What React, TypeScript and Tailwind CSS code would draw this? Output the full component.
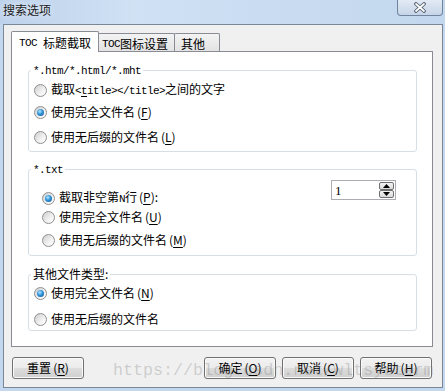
import React from "react";

const Radio = ({ checked }: { checked?: boolean }) => (
  <span className="w-[13px] h-[13px] shrink-0 rounded-full border border-[#8f8f8f] bg-[linear-gradient(135deg,#cdcdcd,#f2f2f2_60%,#ffffff)] flex items-center justify-center">
    {checked && (
      <span className="w-[7px] h-[7px] rounded-full bg-[radial-gradient(circle_at_40%_35%,#b4e6fc_0%,#2f93d8_45%,#0b4c90_100%)]" />
    )}
  </span>
);

const M = ({ children }: { children: React.ReactNode }) => (
  <span className="font-['Liberation_Mono',monospace] text-[11px] tracking-[-0.6px]">{children}</span>
);

const K = ({ k }: { k: string }) => (
  <span className="ml-[2px]">
    (<span className="underline underline-offset-2">{k}</span>)
  </span>
);

const Row = ({
  checked,
  children,
  className,
}: {
  checked?: boolean;
  children: React.ReactNode;
  className?: string;
}) => (
  <div className={"flex items-center gap-[4px] whitespace-nowrap " + (className ?? "")}>
    <Radio checked={checked} />
    <span className="leading-[16px]">{children}</span>
  </div>
);

const Btn = ({ children, className }: { children: React.ReactNode; className?: string }) => (
  <div
    className={
      "w-[72px] h-[22px] rounded-[3px] border border-[#707070] bg-[linear-gradient(#f2f2f2_0%,#ebebeb_50%,#dddddd_50%,#cfcfcf_100%)] shadow-[inset_0_0_0_1px_#fbfbfb] flex items-center justify-center leading-[14px] " +
      (className ?? "")
    }
  >
    {children}
  </div>
);

const SpinBtn = ({ up }: { up?: boolean }) => (
  <div className="w-[15px] h-[8px] rounded-[2px] border border-[#707070] bg-[linear-gradient(#f4f4f4,#d9d9d9)] flex items-center justify-center">
    <svg width="7" height="4" viewBox="0 0 7 4">
      {up ? <path d="M0 4 L3.5 0 L7 4 Z" fill="#000" /> : <path d="M0 0 L7 0 L3.5 4 Z" fill="#000" />}
    </svg>
  </div>
);

export default function App() {
  return (
    <div className="relative w-[445px] h-[391px] overflow-hidden bg-[#c3d7ee] flex flex-col font-['Noto_Sans_CJK_SC',sans-serif] text-[12px] text-black">
      {/* title bar */}
      <div className="h-[24px] shrink-0 flex items-start justify-between bg-[linear-gradient(90deg,#bdd2eb,#d0e1f4_30%,#c9dcf1_60%,#c3d7ee)]">
        <span className="ml-[3px] mt-[2px] text-[12px] leading-[16px] text-[#1b1b1b] [text-shadow:0_0_6px_rgba(255,255,255,0.9)]">
          搜索选项
        </span>
        <div className="mr-[2px] w-[46px] h-[16px] rounded-b-[4px] border border-t-0 border-[#71849d] bg-[linear-gradient(#e2eaf4,#c6d5e8)] flex items-center justify-center">
          <svg width="14" height="11" viewBox="0 0 14 11">
            <path d="M3 2 L11 9 M11 2 L3 9" stroke="#4a5768" strokeWidth="3.6" strokeLinecap="round" />
            <path d="M3 2 L11 9 M11 2 L3 9" stroke="#ffffff" strokeWidth="1.8" strokeLinecap="round" />
          </svg>
        </div>
      </div>

      {/* client */}
      <div className="ml-[3px] mr-[2px] mb-[3px] flex-1 border border-[#7a8797] bg-[#f0f0f0] flex flex-col">
        {/* tabs */}
        <div className="ml-[7px] mt-[6px] h-[20px] flex items-end">
          <div className="relative z-10 w-[88px] h-[21px] -mb-px border border-b-0 border-[#898c95] rounded-t-[2px] bg-white flex items-center pl-[7px] pt-[1px] whitespace-nowrap leading-[14px]">
            <M>TOC</M>
            <span className="ml-[6px]">标题截取</span>
          </div>
          <div className="w-[77px] h-[18px] -ml-px border border-b-0 border-[#898c95] rounded-t-[2px] bg-[linear-gradient(#f3f3f3,#e3e3e3)] flex items-center pl-[3px] pt-[2px] whitespace-nowrap leading-[14px]">
            <M>TOC</M>
            <span>图标设置</span>
          </div>
          <div className="w-[46px] h-[18px] -ml-px border border-b-0 border-[#898c95] rounded-t-[2px] bg-[linear-gradient(#f3f3f3,#e3e3e3)] flex items-center pl-[6px] pt-[2px] whitespace-nowrap leading-[14px]">
            其他
          </div>
        </div>

        {/* panel */}
        <div className="ml-[7px] mr-[9px] h-[296px] border border-[#898c95] bg-white pl-[16px] pr-[15px] pt-[10px]">
          {/* group 1 */}
          <fieldset className="border border-[#d5dfe5] rounded-[3px] pl-[5px] pb-[4px]">
            <legend className="ml-[-3px] px-[2px] leading-[14px]">
              <M>*.htm/*.html/*.mht</M>
            </legend>
            <Row className="h-[20px] mt-[2px]">
              截取
              <M>
                &lt;<span className="underline underline-offset-2">t</span>itle&gt;&lt;/title&gt;
              </M>
              之间的文字
            </Row>
            <Row checked className="h-[20px] mt-[2px]">
              使用完全文件名
              <K k="F" />
            </Row>
            <Row className="h-[20px] mt-[5px]">
              使用无后缀的文件名
              <K k="L" />
            </Row>
          </fieldset>

          {/* group 2 */}
          <fieldset className="mt-[9px] border border-[#d5dfe5] rounded-[3px] pb-[6px]">
            <legend className="ml-[2px] px-[2px] leading-[14px]">
              <M>*.txt</M>
            </legend>
            <div className="flex justify-between items-start">
              <div className="pl-[13px] pt-[12px]">
                <Row checked className="h-[18px]">
                  截取非空第<M>N</M>行
                  <K k="P" />:
                </Row>
                <Row className="h-[18px] mt-[1px]">
                  使用完全文件名
                  <K k="U" />
                </Row>
                <Row className="h-[18px] mt-[5px]">
                  使用无后缀的文件名
                  <K k="M" />
                </Row>
              </div>
              <div className="mt-[3px] mr-[20px] w-[65px] h-[20px] border border-[#abadb3] bg-white flex items-center justify-between pl-[3px] pr-[1px]">
                <span className="font-['Liberation_Serif',serif] text-[13px] leading-none">1</span>
                <div className="flex flex-col">
                  <SpinBtn up />
                  <SpinBtn />
                </div>
              </div>
            </div>
          </fieldset>

          {/* group 3 */}
          <fieldset className="mt-[11px] border border-[#d5dfe5] rounded-[3px] pl-[5px] pb-[2px]">
            <legend className="ml-[-3px] px-[2px] leading-[14px]">其他文件类型:</legend>
            <Row checked className="h-[18px] mt-[3px]">
              使用完全文件名
              <K k="N" />
            </Row>
            <Row className="h-[18px] mt-[8px]">使用无后缀的文件名</Row>
          </fieldset>
        </div>

        {/* buttons */}
        <div className="mt-[10px] ml-[8px] mr-[10px] flex">
          <Btn>
            重置
            <K k="R" />
          </Btn>
          <div className="flex-1" />
          <div className="flex gap-[6px]">
            <Btn>
              确定
              <K k="O" />
            </Btn>
            <Btn>
              取消
              <K k="C" />
            </Btn>
            <Btn>
              帮助
              <K k="H" />
            </Btn>
          </div>
        </div>
      </div>

      {/* watermark */}
      <div className="pointer-events-none absolute left-[113px] top-[362px] font-['Liberation_Mono',monospace] text-[16.7px] leading-[17px] text-[rgba(128,128,128,0.32)] whitespace-nowrap">
        https://blog.csdn.net/wltsysterm
      </div>
    </div>
  );
}
